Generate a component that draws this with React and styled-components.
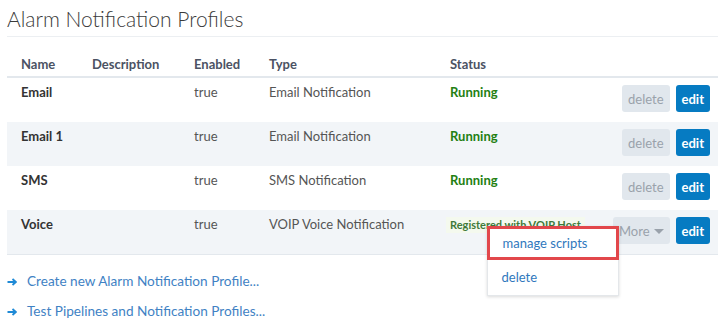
import styled, { createGlobalStyle } from "styled-components"

const GlobalStyle = createGlobalStyle`
    body {
        margin: 0;
        background: #ffffff;
        font-family: 'Lato', 'Liberation Sans', sans-serif;
        color: #333;
    }
`

const Page = styled.div`
    padding: 5px 8px 0 7px;
`

const Title = styled.h1`
    margin: 0;
    font-size: 21px;
    font-weight: 300;
    color: #3a3a3a;
    line-height: 27px;
    padding-bottom: 4px;
    border-bottom: 1px solid #eceff2;
`

const Table = styled.div`
    margin-top: 13px;
    font-size: 13px;
    border-bottom: 1px solid #e3e8ed;
`

const Row = styled.div`
    display: grid;
    grid-template-columns: 71px 102px 75px 181px 1fr auto;
    height: ${(p) => (p.$head ? "28px" : "44px")};
    background: ${(p) => (p.$striped ? "#f2f5f8" : "#ffffff")};
    border-bottom: ${(p) => (p.$head ? "2px solid #e3e8ed" : "none")};
    box-sizing: border-box;
`

const HeadCell = styled.div`
    padding: 5px 0 0 14px;
    font-weight: 700;
    color: #4b5263;
    line-height: 18px;
`

const Cell = styled.div`
    padding: 5px 0 0 14px;
    line-height: 18px;
    color: #555;
    font-weight: ${(p) => (p.$bold ? 700 : 400)};
    ${(p) => p.$bold && "color: #333;"}
`

const Status = styled.span`
    font-weight: 700;
    color: ${(p) => (p.$pending ? "#3f7a3a" : "#238012")};
    ${(p) =>
        p.$pending &&
        `background: #f4f9ee; padding: 0 4px; margin-left: -4px; font-size: 11px; display: inline-block; line-height: 16px;`}
`

const Actions = styled.div`
    display: flex;
    gap: 6px;
    padding: 7px 8px 0 0;
    align-items: flex-start;
`

const Btn = styled.button`
    border: none;
    border-radius: 3px;
    height: 27px;
    padding: 0 6px;
    font-family: inherit;
    font-size: 13px;
    background: ${(p) => (p.$primary ? "#067bc2" : "#e1e7ed")};
    color: ${(p) => (p.$primary ? "#ffffff" : "#9aa2ab")};
    font-weight: ${(p) => (p.$primary ? 700 : 400)};
    display: flex;
    align-items: center;
    gap: 4px;
`

const Caret = styled.span`
    width: 0;
    height: 0;
    border-left: 5px solid transparent;
    border-right: 5px solid transparent;
    border-top: 5px solid #9aa2ab;
    margin-top: 2px;
`

const MoreWrap = styled.div`
    position: relative;
`

const Menu = styled.div`
    position: absolute;
    top: 9px;
    right: 51px;
    width: 130px;
    background: #fff;
    border: 1px solid #e4e7ea;
    box-shadow: 0 1px 3px rgba(0, 0, 0, 0.15);
    z-index: 2;
`

const MenuItem = styled.div`
    height: ${(p) => (p.$marked ? "34px" : "35px")};
    line-height: ${(p) => (p.$marked ? "28px" : "34px")};
    padding-left: 13px;
    font-size: 13px;
    color: #2f78bd;
    box-sizing: border-box;
    border: ${(p) => (p.$marked ? "3px solid #e2474b" : "none")};
    margin: ${(p) => (p.$marked ? "-1px -1px 0" : "0")};
    ${(p) => !p.$marked && "padding-left: 14px;"}
`

const Links = styled.div`
    padding-top: 17px;
    display: flex;
    flex-direction: column;
    gap: 11px;
`

const LinkRow = styled.a`
    display: flex;
    align-items: center;
    gap: 10px;
    font-size: 13.6px;
    color: #3f82c4;
    text-decoration: none;
    line-height: 19px;
`

const Arrow = styled.svg`
    width: 10px;
    height: 10px;
    flex: none;
`

const profiles = [
    { name: "Email", enabled: "true", type: "Email Notification", status: "Running" },
    { name: "Email 1", enabled: "true", type: "Email Notification", status: "Running" },
    { name: "SMS", enabled: "true", type: "SMS Notification", status: "Running" },
    { name: "Voice", enabled: "true", type: "VOIP Voice Notification", status: "Registered with VOIP Host", voip: true },
]

function ArrowIcon() {
    return (
        <Arrow viewBox="0 0 10 10">
            <path d="M0.5 5 H8.5 M5.5 2 L8.8 5 L5.5 8" stroke="#1f8ad6" strokeWidth="1.8" fill="none" />
        </Arrow>
    )
}

export default function App() {
    return (
        <Page>
            <GlobalStyle />
            <Title>Alarm Notification Profiles</Title>
            <Table>
                <Row $head>
                    <HeadCell>Name</HeadCell>
                    <HeadCell>Description</HeadCell>
                    <HeadCell>Enabled</HeadCell>
                    <HeadCell>Type</HeadCell>
                    <HeadCell>Status</HeadCell>
                    <HeadCell />
                </Row>
                {profiles.map((p, i) => (
                    <Row key={p.name} $striped={i % 2 === 1}>
                        <Cell $bold>{p.name}</Cell>
                        <Cell />
                        <Cell>{p.enabled}</Cell>
                        <Cell>{p.type}</Cell>
                        <Cell>
                            <Status $pending={p.voip}>{p.status}</Status>
                        </Cell>
                        <Actions>
                            {p.voip ? (
                                <MoreWrap>
                                    <Btn>More <Caret /></Btn>
                                    <Menu>
                                        <MenuItem $marked>manage scripts</MenuItem>
                                        <MenuItem>delete</MenuItem>
                                    </Menu>
                                </MoreWrap>
                            ) : (
                                <Btn>delete</Btn>
                            )}
                            <Btn $primary>edit</Btn>
                        </Actions>
                    </Row>
                ))}
            </Table>
            <Links>
                <LinkRow href="#"><ArrowIcon />Create new Alarm Notification Profile...</LinkRow>
                <LinkRow href="#"><ArrowIcon />Test Pipelines and Notification Profiles...</LinkRow>
            </Links>
        </Page>
    )
}
